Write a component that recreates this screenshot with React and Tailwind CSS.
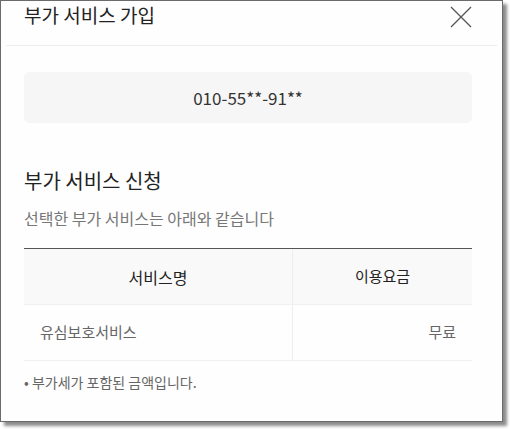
import React from 'react';

const ko = { fontFamily: '"Noto Sans CJK KR", "Noto Sans", sans-serif' };

const AddonServiceModal = () => {
  return (
    <div className="w-[510px] h-[429px] bg-white" style={ko}>
      <div className="relative w-[503px] h-[422px] bg-[#fefefe] border border-[#6b6b6b] shadow-[4px_4px_3px_rgba(0,0,0,0.45)] overflow-hidden">
        {/* Header */}
        <div className="mx-[5px] h-[45px] border-b border-[#ededed] flex items-start justify-between pl-[18px] pr-[24px]">
          <h1 className="text-[19px] leading-[28px] text-[#222]">부가 서비스 가입</h1>
          <button className="mt-[4px] w-[24px] h-[24px] text-[#555]">
            <svg width="24" height="24" viewBox="0 0 24 24" fill="none" stroke="currentColor" strokeWidth="1.3">
              <path d="M2 2 L22 22 M22 2 L2 22" />
            </svg>
          </button>
        </div>

        <div className="pl-[23px] pr-[30px]">
          {/* Phone number */}
          <div className="mt-[26px] h-[51px] rounded-[5px] bg-[#f6f6f6] flex items-center justify-center">
            <span className="text-[17px] text-[#333]">010-55**-91**</span>
          </div>

          <h2 className="mt-[44px] text-[20px] leading-[28px] text-[#222]">부가 서비스 신청</h2>
          <p className="mt-[11px] text-[16px] leading-[24px] text-[#777]">선택한 부가 서비스는 아래와 같습니다</p>

          {/* Table */}
          <div className="mt-[18px] border-t border-[#555]">
            <div className="grid grid-cols-[269px_1fr] border-b border-[#f0f0f0] h-[56px] bg-[#f9f9f9]">
              <div className="flex items-center justify-center border-r border-[#eeeeee] text-[16px] text-[#222]">서비스명</div>
              <div className="flex items-center justify-center text-[15px] text-[#222]">이용요금</div>
            </div>
            <div className="grid grid-cols-[269px_1fr] border-b border-[#f0f0f0] h-[56px]">
              <div className="flex items-center pl-[16px] border-r border-[#eeeeee] text-[15px] text-[#666]">유심보호서비스</div>
              <div className="flex items-center justify-end pr-[16px] text-[15px] text-[#666]">무료</div>
            </div>
          </div>

          <p className="mt-[11px] text-[14px] leading-[20px] text-[#666]">• 부가세가 포함된 금액입니다.</p>
        </div>
      </div>
    </div>
  );
};

export default AddonServiceModal;
